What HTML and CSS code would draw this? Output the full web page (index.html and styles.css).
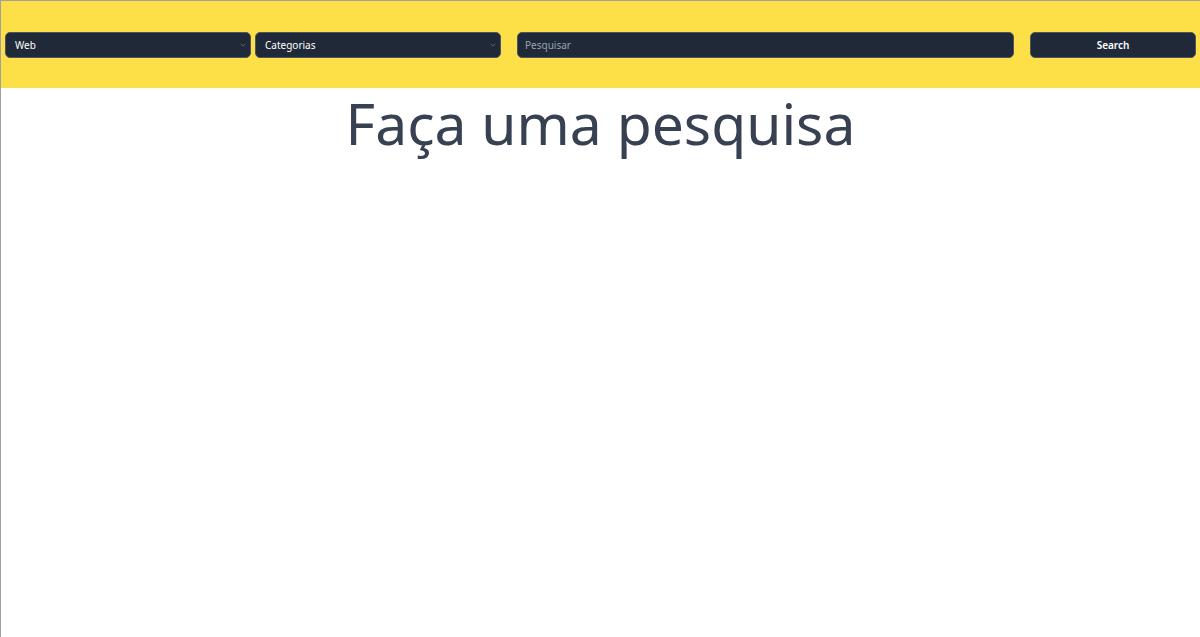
FILE: index.html
```html
<!DOCTYPE html>
<html lang="pt">
<head>
<meta charset="utf-8">
<title>Pesquisa</title>
<link rel="stylesheet" href="styles.css">
</head>
<body>
<div class="frame">
  <header class="bar">
    <div class="select sel-1">
      <span>Web</span>
      <svg class="chev" viewBox="0 0 8 5" width="6" height="4"><path d="M1 1l3 3 3-3" fill="none" stroke="#6b7280" stroke-width="1"/></svg>
    </div>
    <div class="select sel-2">
      <span>Categorias</span>
      <svg class="chev" viewBox="0 0 8 5" width="6" height="4"><path d="M1 1l3 3 3-3" fill="none" stroke="#6b7280" stroke-width="1"/></svg>
    </div>
    <div class="search-input"><span class="ph">Pesquisar</span></div>
    <button class="btn">Search</button>
  </header>
  <main class="content">
    <h1 class="title">Faça uma pesquisa</h1>
  </main>
</div>
</body>
</html>
```
FILE: styles.css
```css
html, body {
  margin: 0;
  padding: 0;
  height: 100%;
  background: #ffffff;
}
body {
  font-family: "Noto Sans", "Open Sans", sans-serif;
}
.frame {
  box-sizing: border-box;
  height: 637px;
  border-left: 1px solid #a0a0a0;
  border-top: 1px solid #a0a0a0;
}
.bar {
  background: #fde047;
  height: 87px;
  box-sizing: border-box;
  display: flex;
  align-items: center;
  padding: 0 4px 0 4px;
}
.select, .search-input, .btn {
  box-sizing: border-box;
  height: 26px;
  background: #1f2937;
  border: 1px solid #4b5563;
  border-radius: 5px;
  color: #ffffff;
  font-size: 10px;
  display: flex;
  align-items: center;
}
.select {
  width: 246px;
  padding: 0 4px 0 9px;
  justify-content: space-between;
}
.sel-2 {
  margin-left: 4px;
}
.chev {
  display: block;
}
.search-input {
  margin-left: 16px;
  width: 497px;
  padding: 0 7px;
}
.ph {
  color: #9ca3af;
}
.btn {
  margin-left: 16px;
  width: 166px;
  justify-content: center;
  font-family: "Noto Sans", sans-serif;
  font-weight: 600;
  font-size: 10px;
}
.content {
  display: flex;
  justify-content: center;
}
.title {
  margin: 0;
  font-weight: 400;
  font-size: 57px;
  line-height: 70px;
  color: #374151;
}
```
